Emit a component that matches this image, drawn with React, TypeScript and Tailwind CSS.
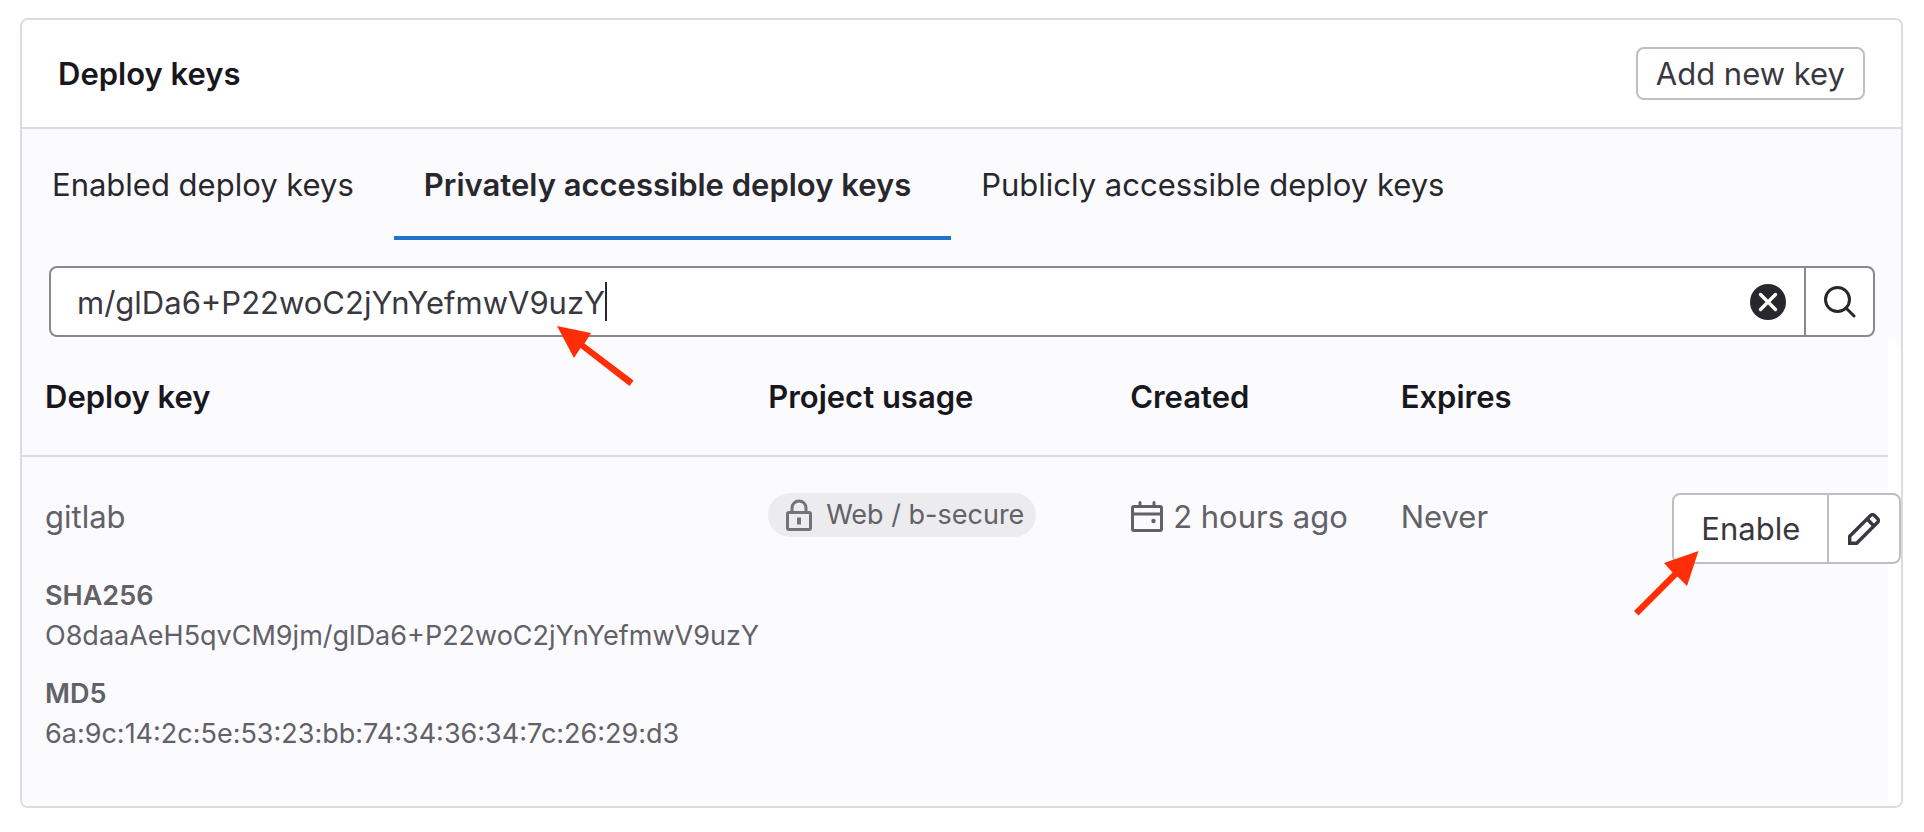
import { useState } from 'react';

const LockIcon = () => (
  <svg className="h-8 w-8 shrink-0 text-[#737278]" viewBox="0 0 32 32" fill="none" stroke="currentColor" strokeWidth="3" aria-hidden="true">
    <rect x="4.5" y="13.5" width="23" height="17" rx="1.5" />
    <path d="M9 13.5V9a7 7 0 0 1 14 0v4.5" />
    <path d="M16 18.5v7" strokeWidth="4" />
  </svg>
);

const CalendarIcon = () => (
  <svg className="h-8 w-8 shrink-0" viewBox="0 0 32 32" fill="none" stroke="currentColor" strokeWidth="3" aria-hidden="true">
    <rect x="1.5" y="5.5" width="29" height="24" rx="1.5" />
    <path d="M1.5 13h29" />
    <path d="M9 5V1.5M23 5V1.5" strokeLinecap="round" />
    <circle cx="22.5" cy="20" r="2.2" fill="currentColor" stroke="none" />
  </svg>
);

const SearchIcon = () => (
  <svg className="h-8 w-8" viewBox="0 0 32 32" fill="none" stroke="currentColor" strokeWidth="3" aria-hidden="true">
    <circle cx="13.5" cy="13.5" r="12" />
    <path d="M22 22l8 8" strokeLinecap="round" />
  </svg>
);

const ClearIcon = () => (
  <svg className="h-9 w-9" viewBox="0 0 36 36" aria-hidden="true">
    <circle cx="18" cy="18" r="18" fill="currentColor" />
    <path d="M10.5 10.5l15 15M25.5 10.5l-15 15" stroke="white" strokeWidth="3.4" strokeLinecap="round" />
  </svg>
);

const PencilIcon = () => (
  <svg className="h-8 w-8" viewBox="0 0 32 32" fill="none" stroke="currentColor" strokeWidth="3.4" aria-hidden="true">
    <path d="M1.700 30.300v-7L22.800 2.300a2.400 2.400 0 0 1 3.400 0l3.500 3.500a2.400 2.400 0 0 1 0 3.400L8.700 30.300z" />
    <path d="M19 6l7 7" />
  </svg>
);

const tabs = ['Enabled deploy keys', 'Privately accessible deploy keys', 'Publicly accessible deploy keys'];

const fingerprints = [
  { label: 'SHA256', value: 'O8daaAeH5qvCM9jm/glDa6+P22woC2jYnYefmwV9uzY' },
  { label: 'MD5', value: '6a:9c:14:2c:5e:53:23:bb:74:34:36:34:7c:26:29:d3' },
];

const SearchBox = () => {
  const [query, setQuery] = useState('m/glDa6+P22woC2jYnYefmwV9uzY');

  return (
    <form
      className="relative mr-[26px] ml-[27px] mt-[26px] flex h-[71px] rounded-lg border-2 border-[#89888d] bg-white"
      onSubmit={(e) => e.preventDefault()}
    >
      <label className="flex min-w-0 flex-1 cursor-text items-center pl-[26px]">
        <input
          type="text"
          aria-label="Search deploy keys"
          value={query}
          onChange={(e) => setQuery(e.target.value)}
          className="min-w-0 pt-0.5 text-[#3a383f] caret-transparent outline-none [field-sizing:content]"
        />
        <span className="h-[39px] w-0.5 bg-[#28272d]" />
      </label>
      <button type="button" aria-label="Clear" className="mr-[18px] text-[#28272d]" onClick={() => setQuery('')}>
        <ClearIcon />
      </button>
      <button
        type="submit"
        aria-label="Search"
        className="flex w-[69px] items-center justify-center border-l-2 border-[#89888d] text-[#28272d]"
      >
        <SearchIcon />
      </button>
      <svg className="pointer-events-none absolute top-[57px] left-[505px] h-[62px] w-20" viewBox="0 0 80 62" aria-hidden="true">
        <path d="M1 1l34 7-6.500 10.500L77.500 55.500l-4 5.500L24.500 23 18 33z" fill="#ff2d08" />
      </svg>
    </form>
  );
};

const App = () => {
  const [active, setActive] = useState(1);

  return (
    <div className="min-h-screen bg-white pt-[18px] pr-[21px] pb-6 pl-5 font-['Inter',sans-serif] text-[31px] leading-10">
      <section className="rounded-lg border-2 border-[#dcdcde] bg-[#fbfafd]">
        <header className="flex items-center justify-between rounded-t-md border-b-2 border-[#dcdcde] bg-white px-9 py-[27px]">
          <h2 className="font-semibold text-[#18171d]">Deploy keys</h2>
          <button type="button" className="h-[53px] rounded-lg border-2 border-[#bfbfc3] bg-white px-[18px] text-[#3a383f]">
            Add new key
          </button>
        </header>

        <div role="tablist" className="flex text-[#28272d]">
          {tabs.map((tab, i) => (
            <button
              key={tab}
              type="button"
              role="tab"
              aria-selected={i === active}
              onClick={() => setActive(i)}
              className={`border-b-4 pt-9 pr-10 pb-[31px] pl-[30px] whitespace-nowrap ${
                i === active ? 'border-[#1f75cb] font-semibold' : 'border-transparent'
              }`}
            >
              {tab}
            </button>
          ))}
        </div>

        <SearchBox />

        <div className="rounded-tr-2xl rounded-b-md bg-white pr-[13px]">
          <table className="w-full table-fixed rounded-bl-md bg-[#fbfafd] text-left text-[#626168]">
            <colgroup>
              <col className="w-[38.7%]" />
              <col className="w-[19.4%]" />
              <col className="w-[14.5%]" />
              <col className="w-[14.5%]" />
              <col />
            </colgroup>
            <thead>
              <tr className="border-b-2 border-[#dcdcde] text-[#18171d]">
                <th className="pt-10 pb-[38px] pl-[23px] font-semibold">Deploy key</th>
                <th className="pt-10 pb-[38px] pl-6 font-semibold">Project usage</th>
                <th className="pt-10 pb-[38px] pl-6 font-semibold">Created</th>
                <th className="pt-10 pb-[38px] pl-6 font-semibold">Expires</th>
                <th aria-label="Actions" />
              </tr>
            </thead>
            <tbody>
              <tr className="align-top">
                <td className="pt-9 pb-[52px] pl-[23px]">
                  <p className="leading-12">gitlab</p>
                  <dl className="mt-[35px] flex flex-col gap-[18px] text-[27px] whitespace-nowrap">
                    {fingerprints.map(({ label, value }) => (
                      <div key={label}>
                        <dt className="font-semibold">{label}</dt>
                        <dd>{value}</dd>
                      </div>
                    ))}
                  </dl>
                </td>
                <td className="pt-9 pl-6">
                  <a href="#project" className="inline-flex h-11 items-center gap-[11px] rounded-full bg-[#ececef] pr-3 pl-[15px] text-[27px] whitespace-nowrap">
                    <LockIcon />
                    Web / b-secure
                  </a>
                </td>
                <td className="pt-9 pl-[25px]">
                  <span className="flex items-center gap-2.5 leading-12 whitespace-nowrap">
                    <CalendarIcon />
                    2 hours ago
                  </span>
                </td>
                <td className="pt-9 pl-6 leading-12">Never</td>
                <td className="pt-9 pl-[25px]">
                  <div className="relative flex h-[71px] w-[229px] rounded-lg border-2 border-[#bfbfc3] bg-white text-[#3a383f]">
                    <button type="button" className="flex-1">
                      Enable
                    </button>
                    <button type="button" aria-label="Edit" className="flex w-[72px] items-center justify-center border-l-2 border-[#bfbfc3]">
                      <PencilIcon />
                    </button>
                    <svg className="pointer-events-none absolute top-14 -left-10 h-[66px] w-[66px]" viewBox="0 0 66 66" aria-hidden="true">
                      <path d="M64.500 0L53 35l-9.500-9.500L4.500 64.500 0 60l38.500-38.500L30 12z" fill="#ff2d08" />
                    </svg>
                  </div>
                </td>
              </tr>
            </tbody>
          </table>
        </div>
      </section>
    </div>
  );
};

export default App;
